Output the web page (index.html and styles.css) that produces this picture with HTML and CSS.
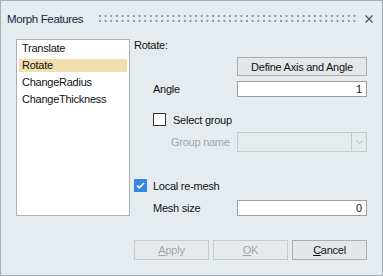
FILE: index.html
```html
<!DOCTYPE html>
<html lang="en">
  <head>
    <meta charset="UTF-8" />
    <title>Morph Features</title>
    <link rel="stylesheet" href="styles.css">
  </head>

  <body>
    <div class="dialog">
      <div class="titlebar">
        <span class="title">Morph Features</span>
        <span class="grip"></span>
        <svg class="close" width="8" height="8" viewBox="0 0 8 8">
          <path d="M0.5 0.5 L7.5 7.5 M7.5 0.5 L0.5 7.5" stroke="#4a4f55" stroke-width="1.1" fill="none" />
        </svg>
      </div>

      <div class="content">
        <ul class="feature-list">
          <li>Translate</li>
          <li class="selected">Rotate</li>
          <li>ChangeRadius</li>
          <li>ChangeThickness</li>
        </ul>

        <div class="panel">
          <div class="section-title">Rotate:</div>

          <button class="btn btn-define">Define Axis and Angle</button>

          <div class="field-row">
            <label for="angle">Angle</label>
            <input type="text" id="angle" class="text-input" value="1" />
          </div>

          <div class="check-row indent">
            <span class="checkbox"></span>
            <span class="check-label">Select group</span>
          </div>

          <div class="field-row group-row">
            <label class="disabled">Group name</label>
            <div class="combo">
              <span class="combo-value"></span>
              <span class="combo-arrow">
                <svg width="7" height="4" viewBox="0 0 7 4">
                  <path d="M0.5 0.5 L3.5 3.5 L6.5 0.5" stroke="#a9aeb3" stroke-width="1" fill="none" />
                </svg>
              </span>
            </div>
          </div>

          <div class="check-row remesh-row">
            <span class="checkbox checked">
              <svg width="13" height="13" viewBox="0 0 13 13">
                <path d="M3 6.5 L5.3 8.8 L10 4" stroke="#fff" stroke-width="1.6" fill="none" />
              </svg>
            </span>
            <span class="check-label">Local re-mesh</span>
          </div>

          <div class="field-row mesh-row">
            <label for="meshSize">Mesh size</label>
            <input type="text" id="meshSize" class="text-input" value="0" />
          </div>

          <div class="button-row">
            <button class="btn" disabled><u>A</u>pply</button>
            <button class="btn" disabled><u>O</u>K</button>
            <button class="btn"><u>C</u>ancel</button>
          </div>
        </div>
      </div>
    </div>
  </body>
</html>
```

FILE: styles.css
```css
:root {
  --panel-bg: #e5ebef;
  --border-color: #a9aeb2;
  --list-border: #adb2b6;
  --input-border: #9a9fa3;
  --disabled-border: #c6cacd;
  --disabled-text: #a2a5a8;
  --text-color: #111;
  --check-blue: #3685e3;
}

* {
  box-sizing: border-box;
}

body {
  margin: 0;
  font-family: "Liberation Sans", Arial, sans-serif;
  font-size: 11px;
  letter-spacing: -0.25px;
  color: var(--text-color);
}

.dialog {
  width: 383px;
  height: 276px;
  border: 1px solid var(--border-color);
  background-color: var(--panel-bg);
}

.titlebar {
  height: 38px;
  display: flex;
  align-items: flex-start;
  padding: 0 9px 0 6px;
}

.title {
  margin-top: 10px;
  font-size: 11.5px;
  letter-spacing: -0.35px;
  line-height: 16px;
  color: #1c2742;
}

.grip {
  flex: 1;
  height: 7px;
  margin: 14px 9px 0 16px;
  background-image: radial-gradient(
    circle at 1px 1px,
    #8f959a 0,
    #8f959a 1px,
    transparent 1.2px
  );
  background-size: 5.67px 5px;
}

.close {
  margin-top: 14px;
}

.content {
  display: flex;
  gap: 4px;
  padding: 0 14px 0 15px;
}

.feature-list {
  list-style: none;
  margin: 0;
  padding: 2px 2px;
  width: 114px;
  height: 177px;
  border: 1px solid var(--list-border);
  background-color: #fff;
}

.feature-list li {
  height: 13px;
  line-height: 13px;
  margin-bottom: 4px;
  padding-left: 3px;
  white-space: nowrap;
}

.feature-list li.selected {
  background-color: #f2dfaf;
}

.panel {
  width: 233px;
  display: flex;
  flex-direction: column;
}

.section-title {
  height: 13px;
  line-height: 13px;
}

.btn {
  font-family: inherit;
  font-size: 11px;
  letter-spacing: inherit;
  color: var(--text-color);
  background-color: #e4e7e9;
  border: 1px solid #adadad;
  padding: 0;
  height: 20px;
}

.btn:disabled {
  color: var(--disabled-text);
  border-color: var(--disabled-border);
  background-color: #e6eaed;
}

.btn-define {
  align-self: flex-end;
  width: 130px;
  height: 19px;
  margin-top: 5px;
}

.field-row {
  display: flex;
  align-items: center;
  margin-top: 5px;
  padding-left: 19px;
}

.field-row label {
  flex: 1;
}

.text-input {
  width: 130px;
  height: 16px;
  border: 1px solid var(--input-border);
  background-color: #fff;
  font-family: inherit;
  font-size: 11px;
  text-align: right;
  padding: 0 4px 0 0;
  color: var(--text-color);
}

.check-row {
  display: flex;
  align-items: center;
  height: 13px;
}

.check-row.indent {
  margin-top: 16px;
  padding-left: 19px;
}

.checkbox {
  width: 13px;
  height: 13px;
  border: 1px solid #333;
  background-color: #fff;
  display: flex;
}

.checkbox.checked {
  border: none;
  background-color: var(--check-blue);
}

.check-label {
  margin-left: 7px;
}

.remesh-row {
  margin-top: 27px;
}

.remesh-row .check-label {
  margin-left: 6px;
}

.group-row {
  margin-top: 6px;
  padding-left: 37px;
}

.disabled {
  color: var(--disabled-text);
}

.combo {
  width: 130px;
  height: 20px;
  display: flex;
  border: 1px solid var(--disabled-border);
  background-color: #e6ebee;
}

.combo-value {
  flex: 1;
}

.combo-arrow {
  width: 15px;
  border-left: 1px solid var(--disabled-border);
  display: flex;
  align-items: center;
  justify-content: center;
}

.mesh-row {
  margin-top: 8px;
}

.button-row {
  display: flex;
  gap: 4px;
  margin-top: 24px;
}

.button-row .btn {
  flex: 1;
}
```
